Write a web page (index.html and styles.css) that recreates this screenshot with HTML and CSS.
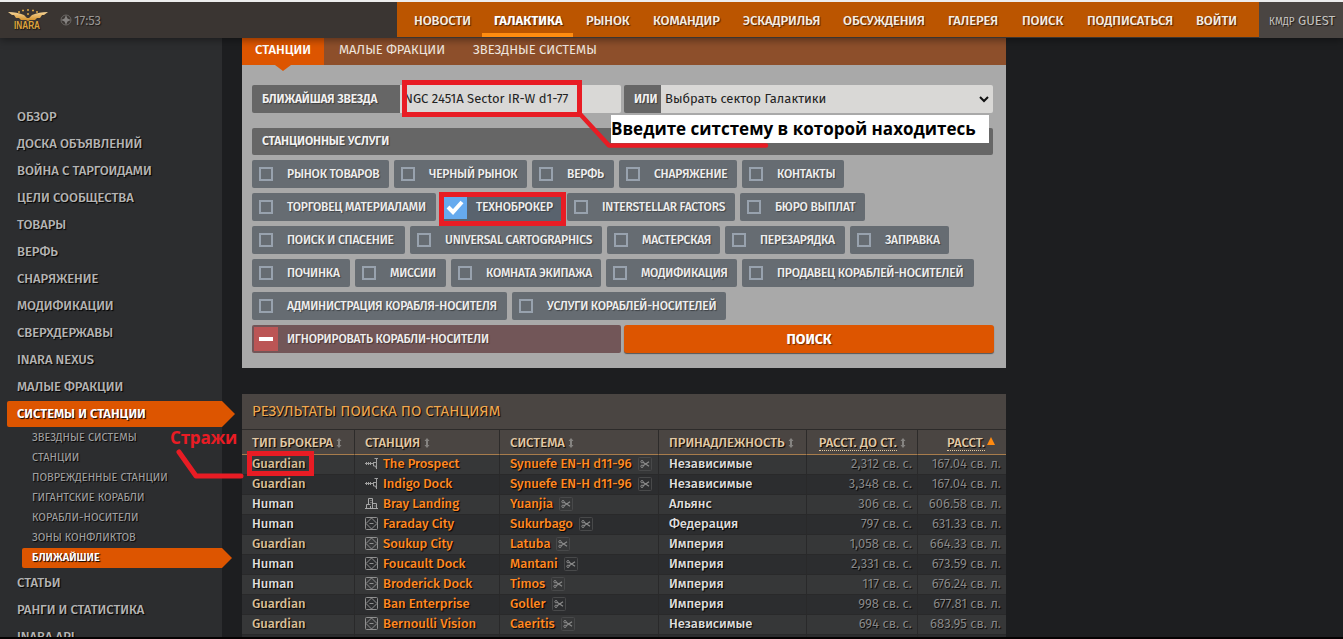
FILE: index.html
```html
<!DOCTYPE html>
<html lang="ru">
<head>
    <meta charset="UTF-8">
    <meta name="viewport" content="width=device-width, initial-scale=1.0">
    <title>INARA - Ближайшие станции</title>
    <link rel="stylesheet" href="styles.css">
</head>
<body>
    <svg class="defs" width="0" height="0">
        <symbol id="outpost" viewBox="0 0 13 13">
            <path d="M1.500 5v3M3.500 5v3M5.500 5v3M0 6.500h8M8.500 5v4h2l1 2.500M8 5.500h3.500M11.500 1v11M9.500 1.500h3.500" fill="none" stroke="#a0a0a0"/>
        </symbol>
        <symbol id="port" viewBox="0 0 13 13">
            <path d="M0 11.500h13M1.500 11V7.500h4M3.500 7V1.500h4V11M5.500 3.500h1M5.500 5.500h1M5.500 9v2M7.500 6.500h4V11M9.500 9h1" fill="none" stroke="#a8a8a8"/>
        </symbol>
        <symbol id="coriolis" viewBox="0 0 13 13">
            <rect x=".5" y=".5" width="12" height="12" rx="1" fill="none" stroke="#8f8f8f"/>
            <path d="M6.500 1L12 6.500 6.500 12 1 6.500zM4.500 6.500h4" fill="none" stroke="#8f8f8f"/>
        </symbol>
        <symbol id="cut" viewBox="0 0 14 14">
            <rect x=".5" y=".5" width="13" height="13" rx="1" fill="none" stroke="#48494a"/>
            <path d="M5 5.200l6 4M5 8.800l6-4" stroke="#8c8c8c" stroke-width="1.200"/>
            <circle cx="4" cy="4.700" r="1.200" fill="none" stroke="#8c8c8c"/>
            <circle cx="4" cy="9.300" r="1.200" fill="none" stroke="#8c8c8c"/>
        </symbol>
        <symbol id="sort" viewBox="0 0 6 10">
            <path d="M3 0l2.500 3H4v4h1.500L3 10 .5 7H2V3H.5z" fill="#858380"/>
        </symbol>
    </svg>

    <header class="header">
        <div class="brand">
            <svg class="logo" width="42" height="22" viewBox="0 0 42 22">
                <defs>
                    <linearGradient id="gold" x1="0" y1="0" x2="0" y2="1">
                        <stop offset="0" stop-color="#f7d79a"/>
                        <stop offset="1" stop-color="#d08a20"/>
                    </linearGradient>
                </defs>
                <path d="M1 3q9 0 16 3l3 3h2l3-3q7-3 16-3l-4 3h-2l-2 3h-3l-2 2h-5l-2 1-2-1h-5l-2-2H9L7 6H5z" fill="url(#gold)"/>
                <path d="M11 3h2M15 1.500h2M20 1h2M25 1.500h2M29 3h2M20 5h2" stroke="#dba646" stroke-width="1.500"/>
                <text x="7" y="20" textLength="26" lengthAdjust="spacingAndGlyphs" class="logo-text">INARA</text>
            </svg>
            <svg class="clock-icon" width="12" height="12" viewBox="0 0 12 12">
                <circle cx="6" cy="6" r="5" fill="none" stroke="#696663"/>
                <path d="M6 1l1.500 3.500L11 6 7.500 7.500 6 11 4.500 7.500 1 6l3.500-1.500z" fill="#858280"/>
            </svg>
            <span class="clock">17:53</span>
        </div>
        <nav class="main-nav">
            <a>НОВОСТИ</a>
            <a class="active">ГАЛАКТИКА</a>
            <a>РЫНОК</a>
            <a>КОМАНДИР</a>
            <a>ЭСКАДРИЛЬЯ</a>
            <a>ОБСУЖДЕНИЯ</a>
            <a>ГАЛЕРЕЯ</a>
            <a>ПОИСК</a>
            <a>ПОДПИСАТЬСЯ</a>
            <a>ВОЙТИ</a>
        </nav>
        <div class="guest"><small>КМДР</small> GUEST</div>
    </header>

    <div class="page">
        <aside class="sidebar">
            <a>ОБЗОР</a>
            <a>ДОСКА ОБЪЯВЛЕНИЙ</a>
            <a>ВОЙНА С ТАРГОИДАМИ</a>
            <a>ЦЕЛИ СООБЩЕСТВА</a>
            <a>ТОВАРЫ</a>
            <a>ВЕРФЬ</a>
            <a>СНАРЯЖЕНИЕ</a>
            <a>МОДИФИКАЦИИ</a>
            <a>СВЕРХДЕРЖАВЫ</a>
            <a>INARA NEXUS</a>
            <a>МАЛЫЕ ФРАКЦИИ</a>
            <a class="active">СИСТЕМЫ И СТАНЦИИ</a>
            <div class="submenu">
                <a>ЗВЕЗДНЫЕ СИСТЕМЫ</a>
                <a>СТАНЦИИ</a>
                <a>ПОВРЕЖДЕННЫЕ СТАНЦИИ</a>
                <a>ГИГАНТСКИЕ КОРАБЛИ</a>
                <a>КОРАБЛИ-НОСИТЕЛИ</a>
                <a>ЗОНЫ КОНФЛИКТОВ</a>
                <a class="active">БЛИЖАЙШИЕ</a>
            </div>
            <a>СТАТЬИ</a>
            <a>РАНГИ И СТАТИСТИКА</a>
            <a>INARA API</a>
        </aside>

        <main class="content">
            <div class="tabs">
                <a class="active">СТАНЦИИ</a>
                <a>МАЛЫЕ ФРАКЦИИ</a>
                <a>ЗВЕЗДНЫЕ СИСТЕМЫ</a>
            </div>
            <form class="search-form">
                <div class="fields">
                    <label class="field-label star">БЛИЖАЙШАЯ ЗВЕЗДА</label>
                    <div class="field"><span>NGC 2451A Sector IR-W d1-77</span></div>
                    <label class="field-label or">ИЛИ</label>
                    <div class="field sector">
                        <span>Выбрать сектор Галактики</span>
                        <svg width="10" height="7" viewBox="0 0 10 7"><path d="M1 1l4 4 4-4" fill="none" stroke="#111" stroke-width="2"/></svg>
                    </div>
                </div>
                <div class="section-title">СТАНЦИОННЫЕ УСЛУГИ</div>
                <div class="options row-1">
                    <label class="option"><i></i><span>РЫНОК ТОВАРОВ</span></label>
                    <label class="option"><i></i><span>ЧЕРНЫЙ РЫНОК</span></label>
                    <label class="option"><i></i><span>ВЕРФЬ</span></label>
                    <label class="option"><i></i><span>СНАРЯЖЕНИЕ</span></label>
                    <label class="option"><i></i><span>КОНТАКТЫ</span></label>
                </div>
                <div class="options row-2">
                    <label class="option"><i></i><span>ТОРГОВЕЦ МАТЕРИАЛАМИ</span></label>
                    <label class="option checked">
                        <i><svg width="18" height="15" viewBox="0 0 18 15"><path d="M2 7l5 5 9-10" fill="none" stroke="#fff" stroke-width="4"/></svg></i>
                        <span>ТЕХНОБРОКЕР</span>
                    </label>
                    <label class="option"><i></i><span>INTERSTELLAR FACTORS</span></label>
                    <label class="option"><i></i><span>БЮРО ВЫПЛАТ</span></label>
                </div>
                <div class="options row-3">
                    <label class="option"><i></i><span>ПОИСК И СПАСЕНИЕ</span></label>
                    <label class="option"><i></i><span>UNIVERSAL CARTOGRAPHICS</span></label>
                    <label class="option"><i></i><span>МАСТЕРСКАЯ</span></label>
                    <label class="option"><i></i><span>ПЕРЕЗАРЯДКА</span></label>
                    <label class="option"><i></i><span>ЗАПРАВКА</span></label>
                </div>
                <div class="options row-4">
                    <label class="option"><i></i><span>ПОЧИНКА</span></label>
                    <label class="option"><i></i><span>МИССИИ</span></label>
                    <label class="option"><i></i><span>КОМНАТА ЭКИПАЖА</span></label>
                    <label class="option"><i></i><span>МОДИФИКАЦИЯ</span></label>
                    <label class="option"><i></i><span>ПРОДАВЕЦ КОРАБЛЕЙ-НОСИТЕЛЕЙ</span></label>
                </div>
                <div class="options row-5">
                    <label class="option"><i></i><span>АДМИНИСТРАЦИЯ КОРАБЛЯ-НОСИТЕЛЯ</span></label>
                    <label class="option"><i></i><span>УСЛУГИ КОРАБЛЕЙ-НОСИТЕЛЕЙ</span></label>
                </div>
                <div class="actions">
                    <label class="option ignore"><i></i><span>ИГНОРИРОВАТЬ КОРАБЛИ-НОСИТЕЛИ</span></label>
                    <button type="button" class="search-btn">ПОИСК</button>
                </div>
            </form>

            <section class="results">
                <h2>РЕЗУЛЬТАТЫ ПОИСКА ПО СТАНЦИЯМ</h2>
                <table>
                    <colgroup>
                        <col class="c-type"><col class="c-station"><col class="c-system"><col class="c-side"><col class="c-arrival"><col class="c-dist">
                    </colgroup>
                    <thead>
                        <tr>
                            <th>ТИП БРОКЕРА <svg class="sort"><use href="#sort"/></svg></th>
                            <th>СТАНЦИЯ <svg class="sort"><use href="#sort"/></svg></th>
                            <th>СИСТЕМА <svg class="sort"><use href="#sort"/></svg></th>
                            <th>ПРИНАДЛЕЖНОСТЬ <svg class="sort"><use href="#sort"/></svg></th>
                            <th class="num"><abbr>РАССТ. ДО СТ.</abbr> <svg class="sort"><use href="#sort"/></svg></th>
                            <th class="num last"><abbr>РАССТ.</abbr><b class="asc"></b></th>
                        </tr>
                    </thead>
                    <tbody>
                        <tr><td class="guardian">Guardian</td><td><svg class="st"><use href="#outpost"/></svg><a>The Prospect</a></td><td><a>Synuefe EN-H d11-96</a><svg class="cut"><use href="#cut"/></svg></td><td>Независимые</td><td class="num">2,312 св. с.</td><td class="num">167.04 св. л.</td></tr>
                        <tr><td class="guardian">Guardian</td><td><svg class="st"><use href="#outpost"/></svg><a>Indigo Dock</a></td><td><a>Synuefe EN-H d11-96</a><svg class="cut"><use href="#cut"/></svg></td><td>Независимые</td><td class="num">3,348 св. с.</td><td class="num">167.04 св. л.</td></tr>
                        <tr><td>Human</td><td><svg class="st"><use href="#port"/></svg><a>Bray Landing</a></td><td><a>Yuanjia</a><svg class="cut"><use href="#cut"/></svg></td><td>Альянс</td><td class="num">306 св. с.</td><td class="num">606.58 св. л.</td></tr>
                        <tr><td>Human</td><td><svg class="st"><use href="#coriolis"/></svg><a>Faraday City</a></td><td><a>Sukurbago</a><svg class="cut"><use href="#cut"/></svg></td><td>Федерация</td><td class="num">797 св. с.</td><td class="num">631.33 св. л.</td></tr>
                        <tr><td class="guardian">Guardian</td><td><svg class="st"><use href="#coriolis"/></svg><a>Soukup City</a></td><td><a>Latuba</a><svg class="cut"><use href="#cut"/></svg></td><td>Империя</td><td class="num">1,058 св. с.</td><td class="num">664.33 св. л.</td></tr>
                        <tr><td>Human</td><td><svg class="st"><use href="#coriolis"/></svg><a>Foucault Dock</a></td><td><a>Mantani</a><svg class="cut"><use href="#cut"/></svg></td><td>Империя</td><td class="num">2,331 св. с.</td><td class="num">673.59 св. л.</td></tr>
                        <tr><td>Human</td><td><svg class="st"><use href="#coriolis"/></svg><a>Broderick Dock</a></td><td><a>Timos</a><svg class="cut"><use href="#cut"/></svg></td><td>Империя</td><td class="num">117 св. с.</td><td class="num">676.24 св. л.</td></tr>
                        <tr><td class="guardian">Guardian</td><td><svg class="st"><use href="#coriolis"/></svg><a>Ban Enterprise</a></td><td><a>Goller</a><svg class="cut"><use href="#cut"/></svg></td><td>Империя</td><td class="num">998 св. с.</td><td class="num">677.81 св. л.</td></tr>
                        <tr><td class="guardian">Guardian</td><td><svg class="st"><use href="#coriolis"/></svg><a>Bernoulli Vision</a></td><td><a>Caeritis</a><svg class="cut"><use href="#cut"/></svg></td><td>Независимые</td><td class="num">694 св. с.</td><td class="num">683.95 св. л.</td></tr>
                        <tr><td></td><td></td><td></td><td></td><td></td><td></td></tr>
                    </tbody>
                </table>
            </section>
        </main>
    </div>

    <!-- hint marks over the page -->
    <svg class="marks" width="1343" height="639" viewBox="0 0 1343 639">
        <g fill="none" stroke="#e81c24" stroke-width="5">
            <rect x="404.500" y="82.500" width="175" height="32"/>
            <rect x="441.500" y="194.500" width="122" height="29"/>
            <rect x="249.500" y="453.500" width="62" height="20"/>
            <path d="M580 114l29 31.500h157" stroke-linecap="round" stroke-linejoin="round" stroke-width="4.500"/>
            <path d="M179 452l17 24h45" stroke-linecap="round" stroke-linejoin="round"/>
        </g>
    </svg>
    <div class="hint hint-system">Введите ситстему в которой находитесь</div>
    <div class="hint hint-guardian">Стражи</div>
    <div class="bottom-edge"></div>
</body>
</html>
```
FILE: styles.css
```css
:root {
    --orange: #dd5500;
    --nav: #bb5500;
    --brown: #4a4542;
    --font: "Fira Sans", "Noto Sans", sans-serif;
}

* {
    box-sizing: border-box;
}

body {
    margin: 0;
    height: 639px;
    overflow: hidden;
    position: relative;
    background: #1d1e20;
    font-family: var(--font);
    font-size: 13px;
    font-stretch: 87.5%;
    color: #ddd;
}

a, span, label, th, td {
    white-space: nowrap;
}

.defs {
    position: absolute;
}

/* header */
.header {
    position: relative;
    z-index: 2;
    display: flex;
    height: 38px;
    border-top: 2px solid #ededed;
    background: #3a3532;
    box-shadow: 0 2px 8px rgba(0, 0, 0, 0.4);
    font-weight: 500;
    text-shadow: 1px 1px 1px rgba(0, 0, 0, 0.6);
}

.brand {
    display: flex;
    align-items: center;
    width: 397px;
    padding-left: 7px;
}

.logo-text {
    font: bold 10px "Liberation Sans", sans-serif;
    fill: #dfa43c;
}

.clock-icon {
    margin-left: 11px;
}

.clock {
    margin-left: 2px;
    color: #999693;
    font-size: 13px;
    font-weight: 400;
    letter-spacing: -0.1px;
}

.main-nav {
    display: flex;
    width: 862px;
    height: 35px;
    padding-left: 5px;
    background: var(--nav);
}

.main-nav a {
    height: 35px;
    padding-left: 12px;
    line-height: 37px;
    color: #f5eee4;
    font-size: 13px;
    font-weight: 500;
    letter-spacing: -0.1px;
}

.main-nav .active {
    color: #fff;
    font-weight: 700;
    border-bottom: 4px solid #ff8c10;
    letter-spacing: 0;
}

.main-nav a:nth-child(1) { width: 80px; }
.main-nav a:nth-child(2) { width: 91px; }
.main-nav a:nth-child(3) { width: 67px; margin-left: 1px; }
.main-nav a:nth-child(4) { width: 90px; }
.main-nav a:nth-child(5) { width: 100px; }
.main-nav a:nth-child(6) { width: 105px; }
.main-nav a:nth-child(7) { width: 74px; }
.main-nav a:nth-child(8) { width: 65px; }
.main-nav a:nth-child(9) { width: 109px; }

.guest {
    flex: 1;
    padding-left: 10px;
    background: var(--brown);
    line-height: 37px;
    font-size: 13px;
    font-weight: 400;
    color: #c5c2bf;
    white-space: nowrap;
}

.guest small {
    font-size: 10px;
}

/* page */
.page {
    display: flex;
    gap: 20px;
    height: 601px;
}

/* sidebar */
.sidebar {
    width: 222px;
    padding: 65px 0 0 7px;
    background: #2c2d2f;
    text-shadow: 1px 1px 1px #000;
}

.sidebar a {
    display: block;
    position: relative;
    height: 27px;
    padding-left: 10px;
    line-height: 28px;
    font-size: 13px;
    font-weight: 500;
    letter-spacing: -0.05px;
    color: #b3b3b3;
}

.sidebar .active {
    top: 1px;
    height: 26px;
    margin-bottom: 1px;
    background: var(--orange);
    border-radius: 2px 0 0 2px;
    color: #fff;
    font-weight: 600;
    line-height: 26px;
}

.sidebar .active::after {
    content: "";
    position: absolute;
    left: 100%;
    top: 0;
    border: 13px solid transparent;
    border-right: 0;
    border-left-color: var(--orange);
}

.submenu {
    padding: 0 0 2px 15px;
}

.submenu a {
    height: 20px;
    line-height: 22px;
    font-size: 11px;
    font-weight: 400;
    letter-spacing: 0;
    color: #a3a3a3;
}

.submenu .active {
    height: 20px;
    margin: 0;
    line-height: 20px;
}

.submenu .active::after {
    border-width: 10px;
    border-right-width: 0;
}

/* tabs */
.content {
    width: 764px;
}

.tabs {
    display: flex;
    height: 27px;
    background: #8d4f2b;
    line-height: 24px;
    font-size: 13px;
    font-weight: 400;
    color: #efe6df;
}

.tabs a {
    position: relative;
    padding-left: 15px;
}

.tabs a:nth-child(2) {
    width: 134px;
}

.tabs .active {
    width: 82px;
    padding-left: 13px;
    background: var(--orange);
    color: #fff;
    font-weight: 500;
}

.tabs .active::after {
    content: "";
    position: absolute;
    left: 33px;
    top: 27px;
    border: 8px solid transparent;
    border-bottom: 0;
    border-top: 6px solid var(--orange);
}

/* search form */
.search-form {
    height: 303px;
    padding: 20px 12px 0 10px;
    background: #a9a9a9;
    font-size: 12px;
    text-shadow: 1px 1px 1px rgba(0, 0, 0, 0.4);
}

.fields {
    display: flex;
    height: 28px;
    line-height: 28px;
}

.field-label {
    background: #666;
    color: #f2f2f2;
    font-weight: 600;
    letter-spacing: -0.15px;
    padding-left: 10px;
    border-radius: 2px 0 0 2px;
}

.star {
    width: 148px;
}

.or {
    width: 37px;
    margin-left: 3px;
}

.field {
    width: 221px;
    padding-left: 4px;
    background: #d9d8d6;
    border-radius: 0 2px 2px 0;
    color: #222;
    font-size: 13px;
    text-shadow: none;
}

.sector {
    display: flex;
    align-items: center;
    justify-content: space-between;
    width: 332px;
    padding-right: 4px;
}

.section-title {
    width: 741px;
    height: 27px;
    margin: 15px 0 5px;
    padding-left: 10px;
    line-height: 26px;
    border-radius: 2px;
    background: #666;
    color: #f2f2f2;
    font-weight: 600;
    letter-spacing: -0.15px;
}

.options {
    display: flex;
    gap: 5px;
    margin-bottom: 5px;
}

.option {
    display: flex;
    align-items: center;
    height: 28px;
    padding-left: 7px;
    border-radius: 2px;
    background: #666c72;
    color: #eee;
    font-weight: 500;
    letter-spacing: -0.2px;
}

.option i {
    flex: none;
    width: 14px;
    height: 14px;
    margin-right: 14px;
    border: 2px solid #98a2ae;
}

.option span {
    line-height: 28px;
}

.checked {
    padding-left: 2px;
    background: #59636e;
}

.checked i {
    display: flex;
    align-items: center;
    justify-content: center;
    width: 24px;
    height: 24px;
    margin-right: 9px;
    border: 0;
    background: #66aaee;
}

.row-1 .option:nth-child(1) { width: 137px; }
.row-1 .option:nth-child(2) { width: 133px; }
.row-1 .option:nth-child(3) { width: 82px; }
.row-1 .option:nth-child(4) { width: 118px; }
.row-1 .option:nth-child(5) { width: 102px; }
.row-2 .option:nth-child(1) { width: 184px; }
.row-2 .option:nth-child(2) { width: 121px; }
.row-2 .option:nth-child(3) { width: 168px; }
.row-2 .option:nth-child(4) { width: 125px; }
.row-3 .option:nth-child(1) { width: 153px; }
.row-3 .option:nth-child(2) { width: 192px; }
.row-3 .option:nth-child(3) { width: 113px; }
.row-3 .option:nth-child(4) { width: 120px; }
.row-3 .option:nth-child(5) { width: 99px; }
.row-4 .option:nth-child(1) { width: 98px; }
.row-4 .option:nth-child(2) { width: 91px; }
.row-4 .option:nth-child(3) { width: 150px; }
.row-4 .option:nth-child(4) { width: 131px; }
.row-4 .option:nth-child(5) { width: 232px; }
.row-5 .option:nth-child(1) { width: 255px; }
.row-5 .option:nth-child(2) { width: 214px; }

.actions {
    display: flex;
    gap: 3px;
}

.ignore {
    width: 369px;
    padding-left: 2px;
    background: #725658;
}

.ignore i {
    width: 24px;
    height: 24px;
    margin-right: 9px;
    border: 0;
    background: linear-gradient(#fff, #fff) center / 14px 4px no-repeat #bb5555;
}

.search-btn {
    width: 370px;
    height: 28px;
    padding: 0;
    border: 0;
    border-radius: 3px;
    background: var(--orange);
    box-shadow: 0 1px 1px rgba(0, 0, 0, 0.5);
    color: #fff;
    font: 700 14px var(--font);
    text-shadow: 1px 1px 1px rgba(0, 0, 0, 0.5);
}

/* results */
.results {
    margin-top: 26px;
    text-shadow: 1px 1px 1px #000;
}

.results h2 {
    height: 35px;
    margin: 0;
    padding-left: 10px;
    background: var(--brown);
    line-height: 35px;
    font-size: 15px;
    font-weight: 400;
    color: #f0a850;
}

table {
    width: 764px;
    table-layout: fixed;
    border-spacing: 0;
}

.c-type { width: 113px; }
.c-station { width: 145px; }
.c-system { width: 159px; }
.c-side { width: 148px; }
.c-arrival { width: 111px; }
.c-dist { width: 88px; }

th {
    height: 26px;
    padding: 1px 0 0 10px;
    border-top: 1px solid #2d2b2a;
    border-right: 1px solid #2d2b2a;
    border-bottom: 1px solid #a87c4c;
    background: var(--brown);
    color: #e0c8a5;
    font-size: 13px;
    line-height: 16px;
    font-weight: 500;
    text-align: left;
}

abbr {
    border-bottom: 1px dotted #e5c9a0;
}

.sort {
    width: 6px;
    height: 10px;
    vertical-align: -1px;
}

.asc {
    display: inline-block;
    margin-left: 2px;
    border: 4px solid transparent;
    border-top: 0;
    border-bottom: 8px solid #ff8a10;
    vertical-align: 2px;
}

td {
    height: 20px;
    padding: 0 0 1px 10px;
    line-height: 18px;
    border-right: 1px solid #29292a;
    border-bottom: 1px solid #29292a;
    background: #2c2d2f;
    color: #ddd;
    font-weight: 500;
    letter-spacing: -0.03px;
}

tbody tr:nth-child(odd) td {
    background: #363738;
}

tr > :last-child {
    border-right: 0;
}

td a {
    color: #ff8822;
}

td.guardian {
    color: #d8bf98;
}

.num {
    padding-left: 0;
    padding-right: 5px;
    text-align: right;
}

td.num {
    color: #888;
    font-weight: 400;
    letter-spacing: 0;
}

th.num {
    padding-right: 11px;
}

.st {
    width: 13px;
    height: 13px;
    margin-right: 5px;
    vertical-align: -2px;
}

.cut {
    width: 14px;
    height: 14px;
    margin-left: 6px;
    vertical-align: -3px;
}

/* hints */
.marks {
    position: absolute;
    left: 0;
    top: 0;
    z-index: 3;
}

.hint {
    position: absolute;
    z-index: 4;
    font-family: "Open Sans", sans-serif;
    font-stretch: 100%;
    font-size: 17px;
    font-weight: 700;
    white-space: nowrap;
}

.hint-system {
    left: 611px;
    top: 115px;
    width: 378px;
    height: 28px;
    background: #fff;
    color: #000;
    line-height: 27px;
}

.hint-guardian {
    left: 170px;
    top: 425px;
    color: #e81c24;
    line-height: 25px;
    letter-spacing: -0.2px;
}

.bottom-edge {
    position: absolute;
    left: 0;
    right: 0;
    bottom: 0;
    z-index: 5;
    height: 2px;
    background: #050202;
}
```
